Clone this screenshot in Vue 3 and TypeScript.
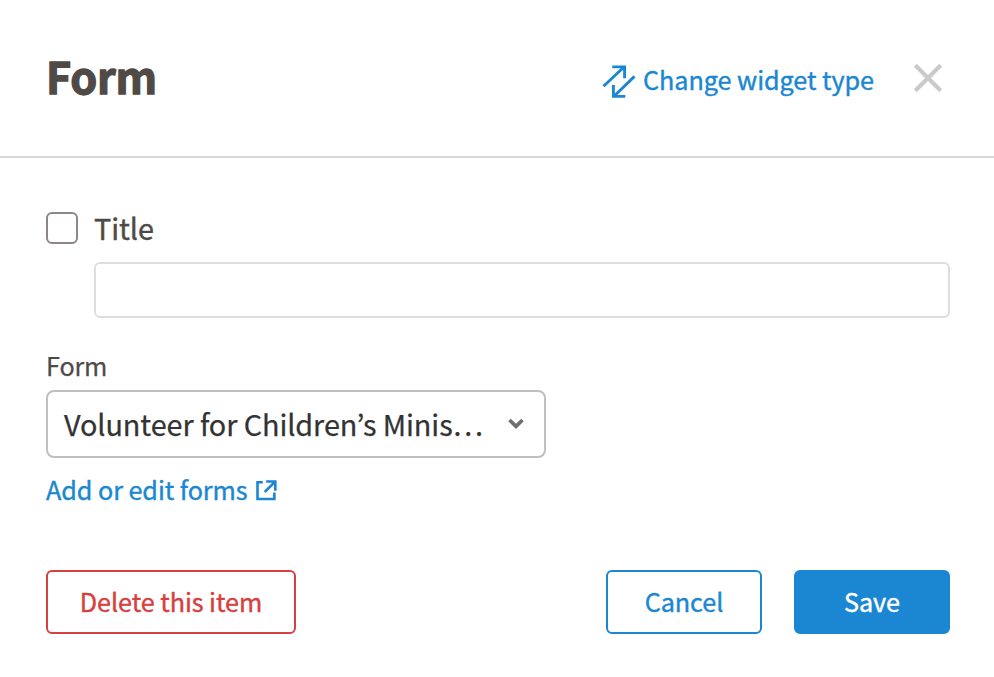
<script setup lang="ts">
import { ref } from 'vue'

const title = ref('')
const showTitle = ref(false)
const selectedForm = ref('Volunteer for Children’s Minis…')
</script>

<template>
  <section class="dialog">
    <header class="header">
      <h1 class="heading"><span>Form</span></h1>
      <a class="change">
        <svg class="swap" width="34" height="34" viewBox="0 0 34 34" fill="none" stroke="currentColor" stroke-width="2.9">
          <path d="M1.5 22.2 22 3M10.3 2.9h12.3v11.4" />
          <path d="M32.5 12.4 12 32.2M23.3 32.4H11.4V21" />
        </svg>
        <span class="change-text">Change widget type</span>
      </a>
      <button class="close" type="button" aria-label="Close">
        <svg width="28" height="28" viewBox="0 0 28 28" stroke="currentColor" stroke-width="4.2">
          <path d="M1.3 1.3 26.7 26.7M26.7 1.3 1.3 26.7" />
        </svg>
      </button>
    </header>

    <form class="body" @submit.prevent>
      <label class="title-row">
        <input v-model="showTitle" class="checkbox" type="checkbox" />
        <span class="title-text">Title</span>
      </label>
      <input v-model="title" class="title-input" type="text" aria-label="Title" />

      <div class="label"><span class="label-text">Form</span></div>
      <button class="select" type="button">
        <span class="select-text">{{ selectedForm }}</span>
        <svg class="chevron" width="16" height="12" viewBox="0 0 16 12" fill="none" stroke="currentColor" stroke-width="3.6">
          <path d="M1.5 2 8 8.4 14.5 2" />
        </svg>
      </button>
      <a class="edit">
        <span class="edit-text">Add or edit forms</span>
        <svg class="external" width="21" height="21" viewBox="0 0 21 21" fill="none" stroke="currentColor" stroke-width="2.6">
          <path d="M6.8 2.2H1.5V19H18.4V12.4" />
          <path d="M10.2 1.5h9.1v9.2M19.1 1.7 8.7 12" />
        </svg>
      </a>

      <footer class="actions">
        <button class="button delete" type="button"><span>Delete this item</span></button>
        <button class="button cancel" type="button"><span>Cancel</span></button>
        <button class="button save" type="submit"><span>Save</span></button>
      </footer>
    </form>
  </section>
</template>

<style>
body {
  background: #fff;
}
</style>

<style scoped>
.dialog,
.dialog * {
  box-sizing: border-box;
}
.dialog {
  height: 677px;
  background: #fff;
  color: #504a47;
  font-family: "Noto Sans CJK KR", "Noto Sans", sans-serif;
  font-size: 25.2px;
  letter-spacing: -0.05px;
  -webkit-text-stroke: 0.25px currentColor;
  overflow: hidden;
}
button {
  font: inherit;
  letter-spacing: inherit;
  background: none;
  border: 0;
  padding: 0;
}
svg {
  display: block;
  flex: none;
}
span {
  white-space: nowrap;
}
.header {
  display: flex;
  height: 158px;
  padding: 0 52px 0 46px;
  border-bottom: 2px solid #d6d6d6;
}
.heading {
  margin: 45px auto 0 0;
  font-size: 43.2px;
  font-weight: 700;
  line-height: 60px;
  letter-spacing: -0.3px;
  -webkit-text-stroke: 1.3px currentColor;
}
.change {
  display: flex;
  height: 34px;
  margin-top: 64px;
  line-height: 30px;
  color: #1b87d2;
  -webkit-text-stroke: 0.4px currentColor;
}
.change-text {
  width: 231px;
  margin-left: 7px;
}
.close {
  height: 28px;
  margin: 64px 0 0 40px;
  color: #cbcac9;
}
.body {
  display: flex;
  flex-direction: column;
  align-items: flex-start;
  padding: 54px 44px 0 46px;
}
.title-row {
  display: flex;
  height: 32px;
  font-size: 28.8px;
  line-height: 32px;
  -webkit-text-stroke: 0.4px currentColor;
}
.checkbox {
  appearance: none;
  width: 32px;
  height: 32px;
  margin: 0 16px 0 0;
  border: 2px solid #8c8684;
  border-radius: 6px;
}
.title-input {
  align-self: stretch;
  height: 56px;
  margin: 18px 0 0 48px;
  padding: 0 14px;
  border: 2px solid #dedede;
  border-radius: 6px;
  font: inherit;
}
.label {
  margin-top: 32px;
  height: 40px;
  line-height: 30px;
  letter-spacing: -0.15px;
}
.select {
  display: flex;
  align-items: center;
  justify-content: space-between;
  width: 500px;
  height: 68px;
  padding: 0 20px 0 16px;
  border: 2px solid #bfbfbf;
  border-radius: 8px;
  color: #333;
  font-size: 28.8px;
  line-height: 62px;
  letter-spacing: -0.08px;
}
.chevron {
  color: #6e6e6e;
}
.edit {
  display: flex;
  height: 32px;
  margin-top: 16px;
  line-height: 30px;
  letter-spacing: -0.06px;
  color: #1b87d2;
  -webkit-text-stroke: 0.4px currentColor;
}
.external {
  margin: 6px 0 0 8px;
}
.actions {
  display: flex;
  align-self: stretch;
  margin-top: 64px;
}
.button {
  width: 156px;
  height: 64px;
  border: 2px solid currentColor;
  border-radius: 6px;
  line-height: 58px;
  padding-bottom: 2px;
  text-align: center;
  -webkit-text-stroke: 0.4px currentColor;
}
.delete {
  width: 250px;
  margin-right: auto;
  color: #d64040;
}
.cancel {
  margin-right: 32px;
  color: #1b87d2;
}
.save {
  background: #1b87d2;
  border-color: #1b87d2;
  color: #fff;
}
</style>
